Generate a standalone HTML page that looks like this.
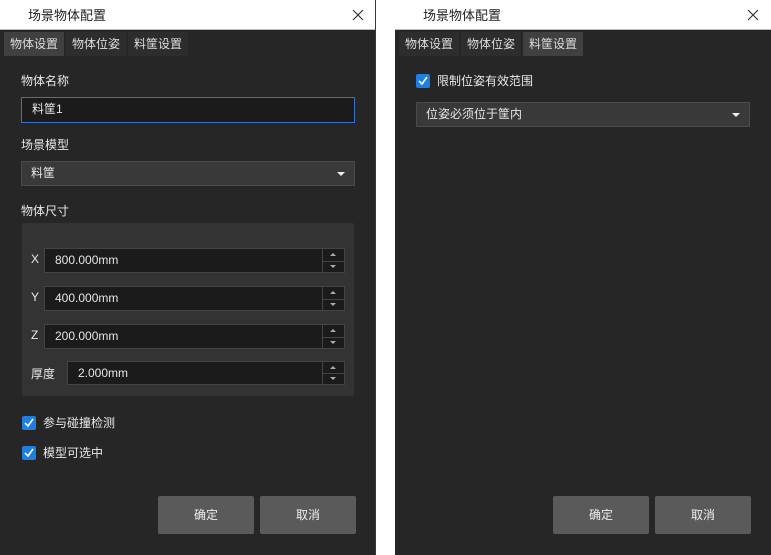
<!DOCTYPE html>
<html><head><meta charset="utf-8"><style>
*{box-sizing:border-box;margin:0;padding:0}
body{width:771px;height:555px;background:#fff;position:relative;overflow:hidden;font-family:"Liberation Sans","Noto Sans CJK SC",sans-serif;font-size:12px;color:#e6e6e6}
.p{position:absolute;top:0;height:555px;background:#262626}
.a{position:absolute}
.tb{position:absolute;left:0;top:0;right:0;height:30px;background:#fff;color:#222;font-size:13px;border-bottom:1px solid #bbb}
.tab{position:absolute;top:32px;height:24px;width:60px;background:#2d2d2d;color:#ddd;text-align:center;line-height:24px;font-size:12px}
.tab.on{background:#404040}
.lab{position:absolute;font-size:12px;color:#e8e8e8}
.inp{position:absolute;background:#1b1b1b;border:1px solid #444;height:25px;line-height:23px;padding-left:10px;font-size:12px}
.sel{position:absolute;background:#393939;border:1px solid #4a4a4a;height:25px;line-height:23px;padding-left:9px}
.sel:after{content:"";position:absolute;right:9px;top:10px;border-left:4px solid transparent;border-right:4px solid transparent;border-top:4px solid #eee}
.sp{position:absolute;right:0;top:0;width:22px;height:100%;border-left:1px solid #444}
.sp:before{content:"";position:absolute;left:7px;top:4px;border-left:3px solid transparent;border-right:3px solid transparent;border-bottom:3px solid #aaa}
.sp:after{content:"";position:absolute;left:7px;bottom:4px;border-left:3px solid transparent;border-right:3px solid transparent;border-top:3px solid #aaa}
.sp i{position:absolute;left:0;right:0;top:50%;border-top:1px solid #444}
.cb{position:absolute;width:14px;height:14px;background:#1e7fe0;border-radius:2px}
.cb svg{position:absolute;left:2px;top:2px}
.btn{position:absolute;top:496px;width:96px;height:38px;background:#5a5a5a;border-radius:2px;text-align:center;line-height:38px;font-size:12px;color:#eee}
</style></head><body>
<div class="p" style="left:0;width:376px;border-right:1px solid #3a3a3a">
 <div class="tb"><span class="a" style="left:28px;top:5px">场景物体配置</span>
 <svg class="a" style="left:352px;top:9px" width="12" height="12"><path d="M1 1L11 11M11 1L1 11" stroke="#333" stroke-width="1.2"/></svg></div>
 <div class="tab on" style="left:4px">物体设置</div>
 <div class="tab" style="left:66px">物体位姿</div>
 <div class="tab" style="left:128px">料筐设置</div>
 <div class="lab" style="left:21px;top:72px">物体名称</div>
 <div class="inp" style="left:21px;top:97px;width:334px;height:26px;border-color:#3b70c8">料筐1</div>
 <div class="lab" style="left:21px;top:136px">场景模型</div>
 <div class="sel" style="left:21px;top:161px;width:334px">料筐</div>
 <div class="lab" style="left:21px;top:202px">物体尺寸</div>
 <div class="a" style="left:22px;top:223px;width:332px;height:173px;background:#333;border-radius:2px"></div>
 <div class="lab" style="left:31px;top:252px">X</div>
 <div class="inp" style="left:44px;top:248px;width:301px">800.000mm<div class="sp"><i></i></div></div>
 <div class="lab" style="left:31px;top:290px">Y</div>
 <div class="inp" style="left:44px;top:286px;width:301px">400.000mm<div class="sp"><i></i></div></div>
 <div class="lab" style="left:31px;top:328px">Z</div>
 <div class="inp" style="left:44px;top:324px;width:301px">200.000mm<div class="sp"><i></i></div></div>
 <div class="lab" style="left:31px;top:365px">厚度</div>
 <div class="inp" style="left:67px;top:361px;width:278px;height:24px">2.000mm<div class="sp"><i></i></div></div>
 <div class="cb" style="left:22px;top:416px"><svg width="10" height="10"><path d="M1 5L4 8L9 1" stroke="#fff" stroke-width="1.6" fill="none"/></svg></div>
 <div class="lab" style="left:43px;top:414px">参与碰撞检测</div>
 <div class="cb" style="left:22px;top:446px"><svg width="10" height="10"><path d="M1 5L4 8L9 1" stroke="#fff" stroke-width="1.6" fill="none"/></svg></div>
 <div class="lab" style="left:43px;top:444px">模型可选中</div>
 <div class="btn" style="left:158px">确定</div>
 <div class="btn" style="left:260px">取消</div>
</div>
<div class="p" style="left:395px;width:376px">
 <div class="tb"><span class="a" style="left:28px;top:5px">场景物体配置</span>
 <svg class="a" style="left:352px;top:9px" width="12" height="12"><path d="M1 1L11 11M11 1L1 11" stroke="#333" stroke-width="1.2"/></svg></div>
 <div class="tab" style="left:4px">物体设置</div>
 <div class="tab" style="left:66px">物体位姿</div>
 <div class="tab on" style="left:128px">料筐设置</div>
 <div class="cb" style="left:21px;top:74px"><svg width="10" height="10"><path d="M1 5L4 8L9 1" stroke="#fff" stroke-width="1.6" fill="none"/></svg></div>
 <div class="lab" style="left:42px;top:72px">限制位姿有效范围</div>
 <div class="sel" style="left:21px;top:102px;width:334px">位姿必须位于筐内</div>
 <div class="btn" style="left:158px">确定</div>
 <div class="btn" style="left:260px">取消</div>
</div>
</body></html>
